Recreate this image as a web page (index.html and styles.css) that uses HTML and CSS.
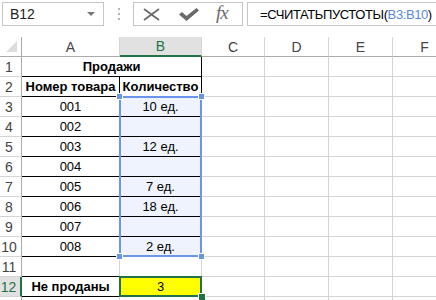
FILE: index.html
```html
<!DOCTYPE html>
<html lang="ru">
<head>
    <meta charset="UTF-8">
    <title>СЧИТАТЬПУСТОТЫ</title>
    <link rel="stylesheet" href="styles.css">
</head>
<body>
    <div class="toolbar">
        <div class="namebox">
            <span>B12</span>
            <span class="arrow"></span>
        </div>
        <div class="grip"><i></i><i></i><i></i></div>
        <div class="fbuttons">
            <svg class="icon-x" width="17" height="13" viewBox="0 0 17 13">
                <path d="M1 1 L16 12 M16 1 L1 12" stroke="#6a6a6a" stroke-width="1.8" fill="none"/>
            </svg>
            <svg class="icon-ok" width="20" height="13" viewBox="0 0 20 13">
                <path d="M0 6.5 L3 4 L7.5 8 L17.5 0 L20 2.5 L7.5 13 Z" fill="#6a6a6a"/>
            </svg>
            <span class="fx">fx</span>
        </div>
        <div class="formula">=СЧИТАТЬПУСТОТЫ(<span class="ref">B3:B10</span>)</div>
    </div>

    <div class="sheet">
        <!-- column headers -->
        <div class="corner"><span class="tri"></span></div>
        <div class="ch">A</div>
        <div class="ch active">B</div>
        <div class="ch">C</div>
        <div class="ch">D</div>
        <div class="ch">E</div>
        <div class="ch">F</div>

        <!-- 1 -->
        <div class="rh">1</div>
        <div class="c bb br merged bold">Продажи</div>
        <div class="c"></div><div class="c"></div><div class="c"></div><div class="c"></div>

        <!-- 2 -->
        <div class="rh">2</div>
        <div class="c bb br bold">Номер товара</div>
        <div class="c bb br bold">Количество</div>
        <div class="c"></div><div class="c"></div><div class="c"></div><div class="c"></div>

        <!-- 3 -->
        <div class="rh">3</div>
        <div class="c bb br">001</div>
        <div class="c bb br sel">10 ед.</div>
        <div class="c"></div><div class="c"></div><div class="c"></div><div class="c"></div>

        <!-- 4 -->
        <div class="rh">4</div>
        <div class="c bb br">002</div>
        <div class="c bb br sel"></div>
        <div class="c"></div><div class="c"></div><div class="c"></div><div class="c"></div>

        <!-- 5 -->
        <div class="rh">5</div>
        <div class="c bb br">003</div>
        <div class="c bb br sel">12 ед.</div>
        <div class="c"></div><div class="c"></div><div class="c"></div><div class="c"></div>

        <!-- 6 -->
        <div class="rh">6</div>
        <div class="c bb br">004</div>
        <div class="c bb br sel"></div>
        <div class="c"></div><div class="c"></div><div class="c"></div><div class="c"></div>

        <!-- 7 -->
        <div class="rh">7</div>
        <div class="c bb br">005</div>
        <div class="c bb br sel">7 ед.</div>
        <div class="c"></div><div class="c"></div><div class="c"></div><div class="c"></div>

        <!-- 8 -->
        <div class="rh">8</div>
        <div class="c bb br">006</div>
        <div class="c bb br sel">18 ед.</div>
        <div class="c"></div><div class="c"></div><div class="c"></div><div class="c"></div>

        <!-- 9 -->
        <div class="rh">9</div>
        <div class="c bb br">007</div>
        <div class="c bb br sel"></div>
        <div class="c"></div><div class="c"></div><div class="c"></div><div class="c"></div>

        <!-- 10 -->
        <div class="rh">10</div>
        <div class="c bb br">008</div>
        <div class="c bb br sel">2 ед.</div>
        <div class="c"></div><div class="c"></div><div class="c"></div><div class="c"></div>

        <!-- 11 -->
        <div class="rh">11</div>
        <div class="c bb"></div>
        <div class="c bb"></div>
        <div class="c"></div><div class="c"></div><div class="c"></div><div class="c"></div>

        <!-- 12 -->
        <div class="rh active">12</div>
        <div class="c bb br bold">Не проданы</div>
        <div class="c bb br yellow">3</div>
        <div class="c"></div><div class="c"></div><div class="c"></div><div class="c"></div>

        <!-- 13 -->
        <div class="rh"></div>
        <div class="c"></div><div class="c"></div><div class="c"></div><div class="c"></div><div class="c"></div><div class="c"></div>

        <!-- selection B3:B10 -->
        <div class="range">
            <span class="h tl"></span><span class="h tr"></span>
            <span class="h bl"></span><span class="h brh"></span>
        </div>
        <!-- active cell B12 -->
        <div class="cursor"><span class="fill"></span></div>
    </div>
</body>
</html>
```

FILE: styles.css
```css
body {
    margin: 0;
    width: 436px;
    height: 300px;
    overflow: hidden;
    background: #fff;
    font-family: "Liberation Sans", Arial, sans-serif;
    font-size: 13px;
    color: #000;
}

/* formula bar */
.toolbar {
    height: 37px;
    box-sizing: border-box;
    padding: 2px 0 0 2px;
    display: flex;
    align-items: flex-start;
}
.namebox {
    width: 102px;
    height: 24px;
    box-sizing: border-box;
    border: 1px solid #c6c6c6;
    display: flex;
    align-items: center;
    justify-content: space-between;
    padding: 0 8px 0 7px;
    font-size: 14px;
    color: #222;
}
.arrow {
    width: 0;
    height: 0;
    border-left: 4px solid transparent;
    border-right: 4px solid transparent;
    border-top: 4px solid #777;
}
.grip {
    width: 29px;
    height: 24px;
    display: flex;
    flex-direction: column;
    align-items: center;
    justify-content: center;
    gap: 3px;
}
.grip i {
    width: 2px;
    height: 2px;
    background: #b4b4b4;
}
.fbuttons {
    width: 110px;
    height: 24px;
    box-sizing: border-box;
    border: 1px solid #c6c6c6;
    display: flex;
    align-items: center;
    padding-left: 9px;
}
.icon-x {
    margin-right: 19px;
}
.icon-ok {
    margin-right: 17px;
}
.fx {
    font-family: "Liberation Serif", serif;
    font-style: italic;
    font-size: 19px;
    color: #6a6a6a;
    letter-spacing: -1px;
    margin-top: -2px;
}
.formula {
    flex: 1;
    height: 24px;
    margin-left: 4px;
    box-sizing: border-box;
    border: 1px solid #c6c6c6;
    border-right: none;
    display: flex;
    align-items: center;
    padding-left: 12px;
    font-size: 13px;
    letter-spacing: -0.4px;
    white-space: nowrap;
}
.ref {
    color: #5b86e5;
}

/* grid */
.sheet {
    position: relative;
    display: grid;
    grid-template-columns: 22px 98px 82px 63px 64px 64px 64px;
    grid-template-rows: 20px repeat(13, 20px);
}
.sheet > div {
    box-sizing: border-box;
}
.corner {
    border-right: 1px solid #ababab;
    border-bottom: 1px solid #ababab;
    position: relative;
}
.tri {
    position: absolute;
    right: 4px;
    bottom: 4px;
    width: 0;
    height: 0;
    border-left: 11px solid transparent;
    border-bottom: 11px solid #dcdcdc;
}
.ch {
    border-right: 1px solid #d4d4d4;
    border-bottom: 1px solid #ababab;
    display: flex;
    align-items: center;
    justify-content: center;
    font-size: 14px;
    color: #444;
}
.ch.active {
    background: #e1e1e1;
    color: #217346;
    border-bottom: 2px solid #217346;
}
.rh {
    border-right: 1px solid #ababab;
    border-bottom: 1px solid #d4d4d4;
    display: flex;
    align-items: center;
    justify-content: center;
    padding-right: 3px;
    font-size: 14px;
    color: #444;
}
.rh.active {
    background: #e1e1e1;
    color: #217346;
    border-right: 2px solid #217346;
}
.c {
    border-right: 1px solid #d4d4d4;
    border-bottom: 1px solid #d4d4d4;
    display: flex;
    align-items: center;
    justify-content: center;
    white-space: nowrap;
}
.c.bb {
    border-bottom-color: #000;
}
.c.br {
    border-right-color: #000;
}
.merged {
    grid-column: span 2;
}
.bold {
    font-weight: bold;
}
.sel {
    background: #eef3fd;
}
.yellow {
    background: #ffff00;
}

/* selection overlays, laid over the grid areas */
.range {
    position: absolute;
    grid-column: 3 / 4;
    grid-row: 4 / 12;
    top: -1px;
    left: -1px;
    right: 0;
    bottom: 0;
    border: 2px solid #6b95ea;
}
.h {
    position: absolute;
    width: 5px;
    height: 5px;
    background: #6b95ea;
    outline: 1px solid #fff;
}
.tl { left: -4px; top: -4px; }
.tr { right: -4px; top: -4px; }
.bl { left: -4px; bottom: -4px; }
.brh { right: -4px; bottom: -4px; }

.cursor {
    position: absolute;
    grid-column: 3 / 4;
    grid-row: 13 / 14;
    top: -1px;
    left: -1px;
    right: 0;
    bottom: 0;
    border: 2px solid #217346;
}
.fill {
    position: absolute;
    right: -5px;
    bottom: -5px;
    width: 6px;
    height: 6px;
    background: #217346;
    outline: 1px solid #fff;
}
```
